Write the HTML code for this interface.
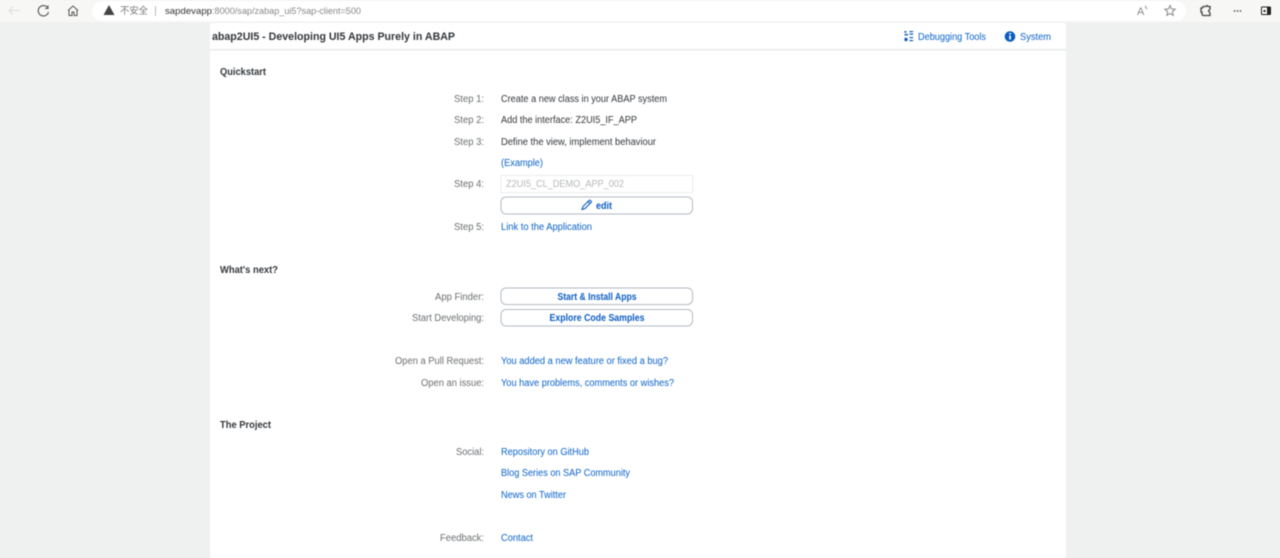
<!DOCTYPE html>
<html><head><meta charset="utf-8"><style>
html,body{margin:0;padding:0;width:1280px;height:558px;overflow:hidden;background:#eff1f1}
svg{display:block;filter:blur(.45px)}
text{font-family:"Liberation Sans","Noto Sans CJK SC",sans-serif;font-size:10px}
.l{fill:#6a6d70}
.v{fill:#32363a}
.a{fill:#0a62c8}
.h{font-weight:700;fill:#32363a;font-size:10px}
.b{font-weight:700;fill:#0a5dc0;font-size:10px}
</style></head><body>
<svg width="1280" height="558" viewBox="0 0 1280 558" xmlns="http://www.w3.org/2000/svg">
<rect width="1280" height="558" fill="#eff1f1"/>
<!-- browser bar -->
<rect width="1280" height="22" fill="#f7f7f6"/>
<rect x="92" y="1" width="1094" height="20" rx="10" fill="#fff"/>
<path d="M9 10.500H20M9 10.500l4-4M9 10.500l4 4" fill="none" stroke="#dcdcdc" stroke-width="1"/>
<path d="M47.500 7.500A5.200 5.200 0 1 0 48.500 12M48 5.500v3h-3" fill="none" stroke="#555" stroke-width="1.100"/>
<path d="M68 10.500l5-4.500 5 4.500M69 9.500v6h3v-3.500h2v3.500h3v-6" fill="none" stroke="#555" stroke-width="1"/>
<path d="M109 5l5.500 10h-11z" fill="#444"/>
<text x="120" y="14" style="font-size:9.500px" fill="#777" textLength="28" lengthAdjust="spacingAndGlyphs">不安全</text>
<rect x="155" y="6" width="1" height="10" fill="#bbb"/>
<text x="165" y="14" style="font-size:9.500px" fill="#333" textLength="47" lengthAdjust="spacingAndGlyphs">sapdevapp</text>
<text x="212" y="14" style="font-size:9.500px" fill="#888" textLength="149" lengthAdjust="spacingAndGlyphs">:8000/sap/zabap_ui5?sap-client=500</text>
<text x="1137" y="15" style="font-size:11px" fill="#888">A</text><path d="M1145 6l2 3" stroke="#aaa" stroke-width="1.400"/>
<path d="M1170 5.500l1.500 3.400 3.700.4-2.800 2.400.8 3.600-3.200-1.900-3.200 1.900.8-3.600-2.800-2.400 3.700-.4z" fill="none" stroke="#888" stroke-width="1"/>
<path d="M1203 6.500h3l1-1 1 1h2v2.500l-1.500 2 1.500 2v2.500h-7l-1-1v-2.500h-1v-4h1.500z" fill="none" stroke="#444" stroke-width="1.300"/>
<circle cx="1234.500" cy="11" r=".9" fill="#555"/><circle cx="1237.500" cy="11" r=".9" fill="#555"/><circle cx="1240.500" cy="11" r=".9" fill="#555"/>
<rect x="1261" y="6.500" width="10" height="8.500" rx="1" fill="#222"/><rect x="1262" y="7.500" width="5" height="6.500" fill="#fff"/><rect x="1263.500" y="10" width="2" height="2" fill="#222"/>
<!-- page -->
<rect x="210" y="23" width="856" height="535" rx="2" fill="#fff"/>
<rect x="210" y="49" width="856" height="1.500" fill="#e9eaec"/>
<text x="212" y="40" style="font-size:11px;font-weight:700;fill:#32363a" textLength="243" lengthAdjust="spacingAndGlyphs">abap2UI5 - Developing UI5 Apps Purely in ABAP</text>
<g fill="#0a5dc0"><rect x="904.500" y="31" width="1.800" height="1.800"/><rect x="904.500" y="34" width="3.600" height="1.400"/><circle cx="906" cy="39.500" r="1.700"/><rect x="909.500" y="31" width="3.600" height="1.200"/><rect x="909.500" y="33.500" width="3.600" height="1.200"/><rect x="909.500" y="37" width="3.600" height="1.200"/><rect x="909.500" y="40" width="3.600" height="1.200"/></g>
<text x="918" y="40" class="a" textLength="68" lengthAdjust="spacingAndGlyphs">Debugging Tools</text>
<circle cx="1010" cy="36.500" r="5.300" fill="#0a5dc0"/><rect x="1009.200" y="35.500" width="1.700" height="4" fill="#fff"/><rect x="1009.200" y="33" width="1.700" height="1.500" fill="#fff"/>
<text x="1020" y="40" class="a" textLength="31" lengthAdjust="spacingAndGlyphs">System</text>

<text x="220" y="75" class="h" textLength="46" lengthAdjust="spacingAndGlyphs">Quickstart</text>
<text x="454" y="102" class="l" textLength="30" lengthAdjust="spacingAndGlyphs">Step 1:</text>
<text x="454" y="123" class="l" textLength="30" lengthAdjust="spacingAndGlyphs">Step 2:</text>
<text x="454" y="145" class="l" textLength="30" lengthAdjust="spacingAndGlyphs">Step 3:</text>
<text x="454" y="187" class="l" textLength="30" lengthAdjust="spacingAndGlyphs">Step 4:</text>
<text x="454" y="230" class="l" textLength="30" lengthAdjust="spacingAndGlyphs">Step 5:</text>
<text x="435" y="300" class="l" textLength="49" lengthAdjust="spacingAndGlyphs">App Finder:</text>
<text x="412" y="321" class="l" textLength="72" lengthAdjust="spacingAndGlyphs">Start Developing:</text>
<text x="395" y="364" class="l" textLength="89" lengthAdjust="spacingAndGlyphs">Open a Pull Request:</text>
<text x="421" y="386" class="l" textLength="63" lengthAdjust="spacingAndGlyphs">Open an issue:</text>
<text x="456" y="455" class="l" textLength="28" lengthAdjust="spacingAndGlyphs">Social:</text>
<text x="440" y="541" class="l" textLength="44" lengthAdjust="spacingAndGlyphs">Feedback:</text>
<text x="501" y="102" class="v" textLength="166" lengthAdjust="spacingAndGlyphs">Create a new class in your ABAP system</text>
<text x="501" y="123" class="v" textLength="136" lengthAdjust="spacingAndGlyphs">Add the interface: Z2UI5_IF_APP</text>
<text x="501" y="145" class="v" textLength="155" lengthAdjust="spacingAndGlyphs">Define the view, implement behaviour</text>
<text x="501" y="166" class="a" textLength="42" lengthAdjust="spacingAndGlyphs">(Example)</text>
<rect x="501" y="175.500" width="191.500" height="17" fill="#fff" stroke="#eceded"/>
<text x="506" y="187" fill="#b5b8ba" textLength="118" lengthAdjust="spacingAndGlyphs">Z2UI5_CL_DEMO_APP_002</text>
<rect x="501" y="197" width="191.500" height="17" rx="5" fill="#fff" stroke="#b4bcc4"/>
<path d="M582 209.500l1-3 6-6c1-1 3 1 2 2l-6 6zM588 201.500l2 2" fill="none" stroke="#0a5dc0" stroke-width="1.100"/>
<text x="596" y="209" class="b" textLength="16" lengthAdjust="spacingAndGlyphs">edit</text>
<text x="501" y="230" class="a" textLength="91" lengthAdjust="spacingAndGlyphs">Link to the Application</text>

<text x="220" y="273" class="h" textLength="58" lengthAdjust="spacingAndGlyphs">What's next?</text>
<rect x="501" y="288" width="191.500" height="16.500" rx="5" fill="#fff" stroke="#b4bcc4"/>
<text x="597" y="300" class="b" text-anchor="middle" textLength="79" lengthAdjust="spacingAndGlyphs">Start &amp; Install Apps</text>
<rect x="501" y="309.500" width="191.500" height="16.500" rx="5" fill="#fff" stroke="#b4bcc4"/>
<text x="597" y="321" class="b" text-anchor="middle" textLength="95" lengthAdjust="spacingAndGlyphs">Explore Code Samples</text>
<text x="501" y="364" class="a" textLength="167" lengthAdjust="spacingAndGlyphs">You added a new feature or fixed a bug?</text>
<text x="501" y="386" class="a" textLength="173" lengthAdjust="spacingAndGlyphs">You have problems, comments or wishes?</text>

<text x="220" y="428" class="h" textLength="51" lengthAdjust="spacingAndGlyphs">The Project</text>
<text x="501" y="455" class="a" textLength="88" lengthAdjust="spacingAndGlyphs">Repository on GitHub</text>
<text x="501" y="476" class="a" textLength="129" lengthAdjust="spacingAndGlyphs">Blog Series on SAP Community</text>
<text x="501" y="498" class="a" textLength="65" lengthAdjust="spacingAndGlyphs">News on Twitter</text>
<text x="501" y="541" class="a" textLength="32" lengthAdjust="spacingAndGlyphs">Contact</text>
</svg>
</body></html>
